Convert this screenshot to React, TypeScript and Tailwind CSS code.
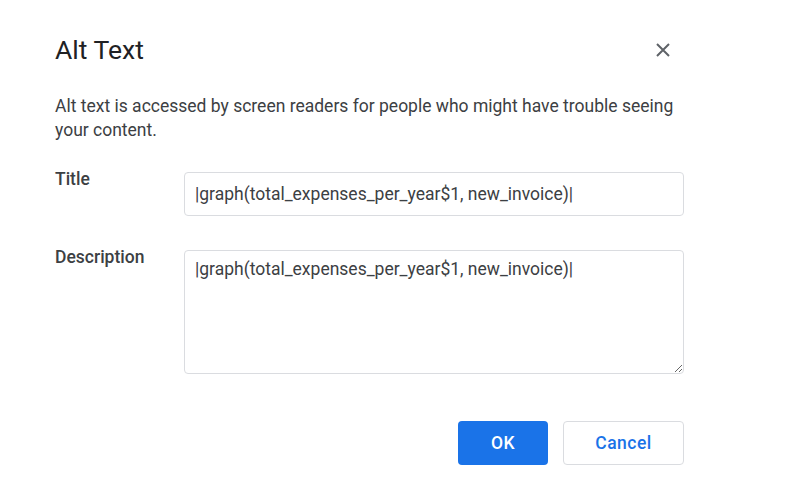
import React from 'react'

export default function App() {
    const value = '|graph(total_expenses_per_year$1, new_invoice)|'

    return (
        <div className="min-h-[500px] w-full bg-white" style={{ fontFamily: 'Roboto, "Liberation Sans", sans-serif' }}>
            <div className="w-[684px] pl-[55px] pt-[34px]">
                {/* Header */}
                <div className="flex items-center justify-between">
                    <h2 className="text-[26.5px] leading-[32px] text-[#202124]">Alt Text</h2>
                    <button className="mr-[5px] flex h-8 w-8 items-center justify-center text-[#5f6368]">
                        <svg width="14" height="14" viewBox="0 0 14 14" fill="none" stroke="currentColor" strokeWidth="2">
                            <path d="M1 1l12 12M13 1L1 13" />
                        </svg>
                    </button>
                </div>

                <p className="mt-[28px] text-[17.5px] leading-[24px] text-[#3c4043]">
                    Alt text is accessed by screen readers for people who might have trouble seeing your content.
                </p>

                {/* Title row */}
                <div className="mt-[30px] flex">
                    <label className="w-[129px] shrink-0 text-[17.5px] font-medium leading-[14px] text-[#3c4043]">Title</label>
                    <input
                        readOnly
                        value={value}
                        className="h-[44px] flex-1 rounded border border-[#dadce0] px-[10px] text-[17.5px] text-[#3c4043] outline-none"
                    />
                </div>

                {/* Description row */}
                <div className="mt-[34px] flex">
                    <label className="w-[129px] shrink-0 text-[17.5px] font-medium leading-[14px] text-[#3c4043]">Description</label>
                    <textarea
                        readOnly
                        value={value}
                        className="h-[124px] flex-1 resize-y rounded border border-[#dadce0] px-[10px] py-[6px] text-[17.5px] leading-[24px] text-[#3c4043] outline-none"
                    />
                </div>

                {/* Actions */}
                <div className="mt-[47px] flex justify-end gap-[15px]">
                    <button className="h-[44px] w-[90px] rounded bg-[#1a73e8] text-[17.5px] font-medium tracking-[0.5px] text-white">OK</button>
                    <button className="h-[44px] w-[121px] rounded border border-[#dadce0] bg-white text-[17.5px] font-medium tracking-[0.5px] text-[#1a73e8]">Cancel</button>
                </div>
            </div>
        </div>
    )
}
